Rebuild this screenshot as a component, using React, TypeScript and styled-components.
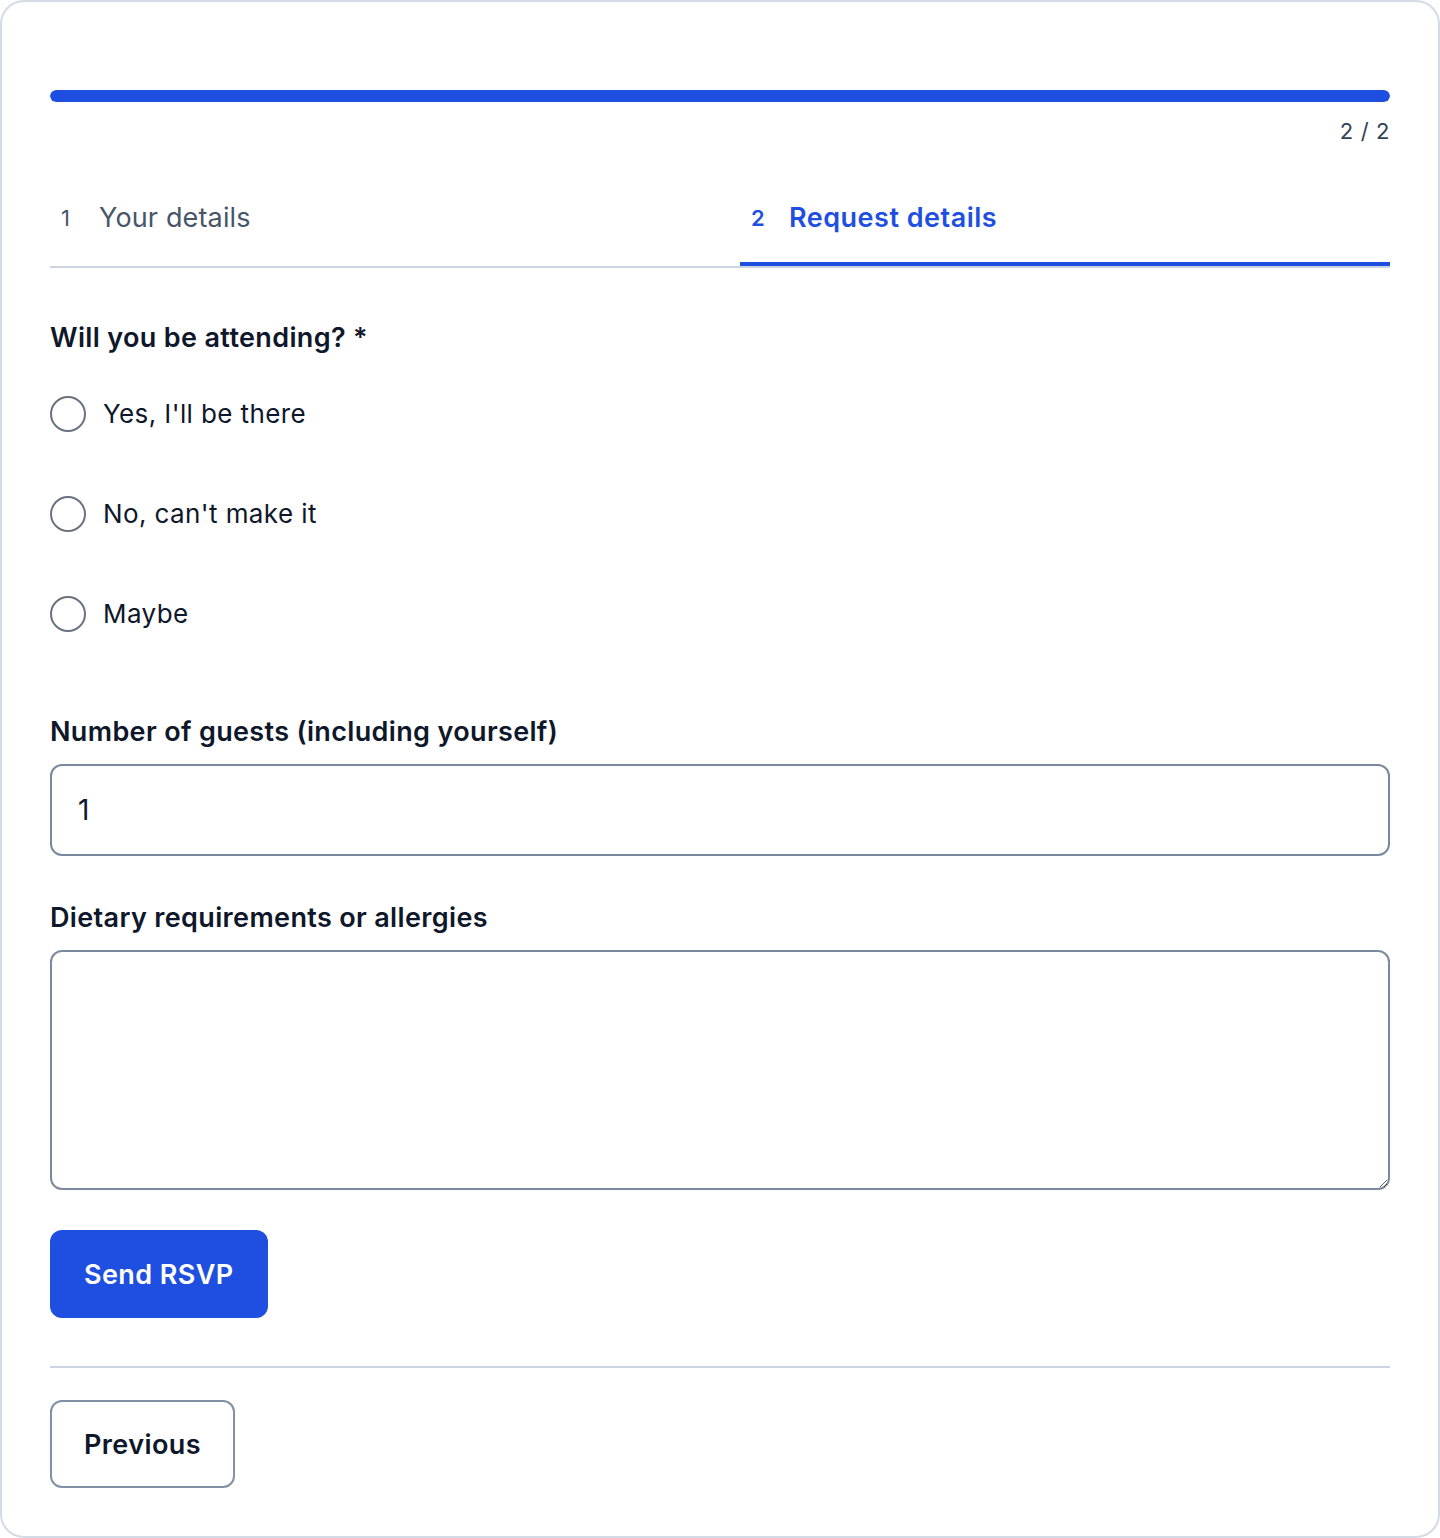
import React, { useState } from 'react';
import styled, { createGlobalStyle } from 'styled-components';

const GlobalStyle = createGlobalStyle`
  * { box-sizing: border-box; }
  html, body {
    margin: 0;
    padding: 0;
    background: #ffffff;
    font-family: Inter, "Noto Sans", "Liberation Sans", sans-serif;
  }
`;

const Card = styled.div`
  width: 1440px;
  height: 1538px;
  border: 2px solid #d3dbe6;
  border-radius: 24px;
  padding: 48px;
  background: #ffffff;
  display: flex;
  flex-direction: column;
`;

const ProgressTrack = styled.div`
  margin-top: 40px;
  height: 12px;
  border-radius: 999px;
  background: #e2e8f0;
  overflow: hidden;
`;

const ProgressFill = styled.div`
  height: 100%;
  border-radius: 999px;
  background: #1f4fe0;
`;

const Counter = styled.div`
  margin-top: 16px;
  text-align: right;
  font-size: 22px;
  line-height: 26px;
  letter-spacing: 0.6px;
  color: #334155;
`;

const TabList = styled.div`
  margin-top: 16px;
  display: grid;
  grid-template-columns: 690px 1fr;
  border-bottom: 2px solid #cbd5e1;
`;

const Tab = styled.button<{ active?: boolean }>`
  all: unset;
  display: flex;
  align-items: center;
  gap: 28px;
  padding: 38px 10px 24px 11px;
  border-bottom: 4px solid ${props => (props.active ? '#1f4fe0' : 'transparent')};
  color: ${props => (props.active ? '#1f4fe0' : '#475569')};
  font-weight: ${props => (props.active ? 600 : 400)};
  letter-spacing: ${props => (props.active ? 0.5 : 0.15)}px;
  cursor: pointer;
`;

const TabNumber = styled.span`
  width: 10px;
  font-size: 22px;
  line-height: 40px;
`;

const TabLabel = styled.span`
  font-size: 27px;
  line-height: 40px;
`;

const FieldLabel = styled.div<{ gap?: number }>`
  margin-top: ${props => props.gap ?? 0}px;
  font-size: 27px;
  line-height: 36px;
  font-weight: 600;
  letter-spacing: 0.35px;
  color: #0f172a;
`;

const RadioGroup = styled.div`
  margin-top: 40px;
  display: flex;
  flex-direction: column;
  gap: 64px;
`;

const RadioRow = styled.label`
  display: flex;
  align-items: center;
  gap: 17px;
  cursor: pointer;
`;

const RadioInput = styled.input`
  appearance: none;
  margin: 0;
  width: 36px;
  height: 36px;
  border-radius: 50%;
  border: 2px solid #6b7280;
  background: #ffffff;
  flex-shrink: 0;

  &:checked {
    border: 10px solid #1f4fe0;
  }
`;

const RadioText = styled.span`
  font-size: 26px;
  line-height: 36px;
  letter-spacing: 0.4px;
  color: #0f172a;
`;

const TextInput = styled.input`
  margin-top: 14px;
  width: 100%;
  height: 92px;
  padding: 0 26px;
  border: 2px solid #7b899d;
  border-radius: 12px;
  font-family: inherit;
  font-size: 28px;
  color: #0f172a;
  background: #ffffff;
  outline: none;
`;

const TextArea = styled.textarea`
  margin-top: 14px;
  width: 100%;
  height: 240px;
  padding: 20px 26px;
  border: 2px solid #7b899d;
  border-radius: 12px;
  font-family: inherit;
  font-size: 28px;
  color: #0f172a;
  background: #ffffff;
  outline: none;
  display: block;
`;

const Button = styled.button<{ variant: 'primary' | 'secondary' }>`
  align-self: flex-start;
  height: 88px;
  padding: 0 ${props => (props.variant === 'primary' ? 34 : 32)}px;
  border-radius: 12px;
  border: ${props => (props.variant === 'primary' ? 'none' : '2px solid #8190a5')};
  background: ${props => (props.variant === 'primary' ? '#1f4fe0' : '#ffffff')};
  color: ${props => (props.variant === 'primary' ? '#ffffff' : '#0f172a')};
  font-family: inherit;
  font-size: 27px;
  font-weight: 600;
  letter-spacing: 0.4px;
  cursor: pointer;
`;

const SubmitRow = styled.div`
  margin-top: 40px;
  display: flex;
`;

const Divider = styled.hr`
  margin: 48px 0 0;
  border: none;
  height: 2px;
  background: #cbd5e1;
`;

const Footer = styled.div`
  margin-top: 32px;
  display: flex;
`;

const options = ["Yes, I'll be there", "No, can't make it", 'Maybe'];

export default function App() {
  const [attending, setAttending] = useState<string | null>(null);
  const [guests, setGuests] = useState('1');
  const [diet, setDiet] = useState('');

  return (
    <>
      <GlobalStyle />
      <Card>
        <ProgressTrack>
          <ProgressFill style={{ width: '100%' }} />
        </ProgressTrack>
        <Counter>2 / 2</Counter>

        <TabList>
          <Tab>
            <TabNumber>1</TabNumber>
            <TabLabel>Your details</TabLabel>
          </Tab>
          <Tab active>
            <TabNumber>2</TabNumber>
            <TabLabel>Request details</TabLabel>
          </Tab>
        </TabList>

        <FieldLabel gap={52}>Will you be attending? *</FieldLabel>
        <RadioGroup>
          {options.map(option => (
            <RadioRow key={option}>
              <RadioInput
                type="radio"
                name="attending"
                checked={attending === option}
                onChange={() => setAttending(option)}
              />
              <RadioText>{option}</RadioText>
            </RadioRow>
          ))}
        </RadioGroup>

        <FieldLabel gap={82}>Number of guests (including yourself)</FieldLabel>
        <TextInput value={guests} onChange={e => setGuests(e.target.value)} />

        <FieldLabel gap={44}>Dietary requirements or allergies</FieldLabel>
        <TextArea value={diet} onChange={e => setDiet(e.target.value)} />

        <SubmitRow>
          <Button variant="primary">Send RSVP</Button>
        </SubmitRow>

        <Divider />

        <Footer>
          <Button variant="secondary">Previous</Button>
        </Footer>
      </Card>
    </>
  );
}
